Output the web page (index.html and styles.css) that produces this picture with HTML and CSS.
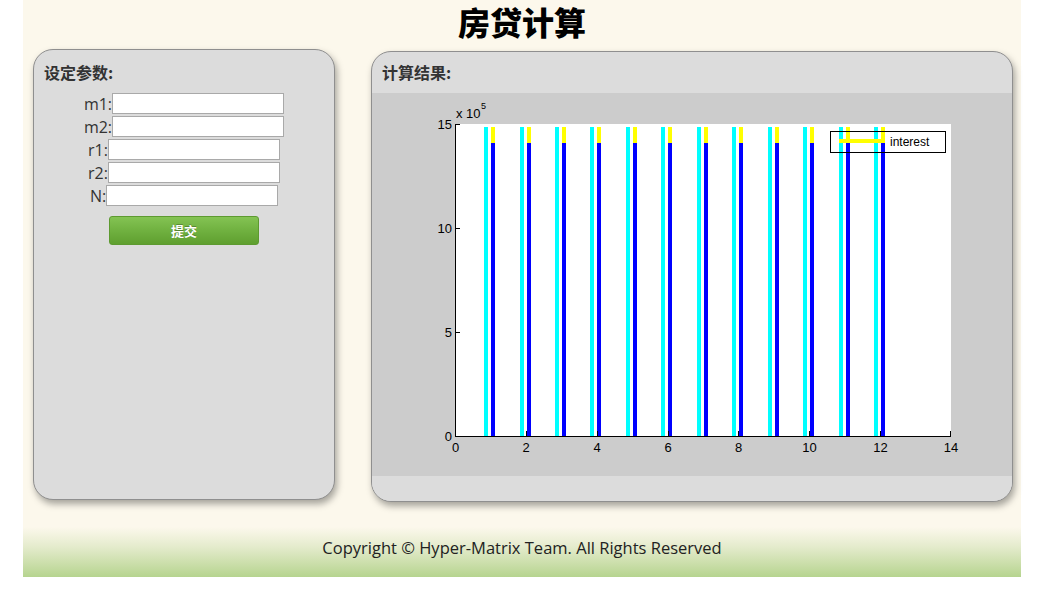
FILE: index.html
```html
<!DOCTYPE html>
<html lang="zh-CN">
<head>
<meta charset="utf-8">
<title>房贷计算</title>
<link rel="stylesheet" href="styles.css">
</head>
<body>
<div class="page">
  <h1 class="title">房贷计算</h1>
  <div class="main">
    <section class="panel panel-left">
      <h2 class="panel-title">设定参数:</h2>
      <form class="form">
        <div class="row"><label>m1:</label><input type="text"></div>
        <div class="row"><label>m2:</label><input type="text"></div>
        <div class="row"><label>r1:</label><input type="text"></div>
        <div class="row"><label>r2:</label><input type="text"></div>
        <div class="row"><label>N:</label><input type="text"></div>
        <div class="btn-row"><button type="button" class="btn">提交</button></div>
      </form>
    </section>
    <section class="panel panel-right">
      <h2 class="panel-title result-title">计算结果:</h2>
      <div class="chart">
        <svg width="639" height="383" viewBox="0 0 639 383" xmlns="http://www.w3.org/2000/svg" font-family="Liberation Sans, Arial, sans-serif">
          <rect x="83" y="31" width="496" height="312" fill="#ffffff"/>
          <g shape-rendering="crispEdges">
            <g fill="#00ffff">
              <rect x="112" y="34" width="4" height="309"/>
              <rect x="148" y="34" width="4" height="309"/>
              <rect x="183" y="34" width="4" height="309"/>
              <rect x="218" y="34" width="4" height="309"/>
              <rect x="254" y="34" width="4" height="309"/>
              <rect x="289" y="34" width="4" height="309"/>
              <rect x="325" y="34" width="4" height="309"/>
              <rect x="360" y="34" width="4" height="309"/>
              <rect x="396" y="34" width="4" height="309"/>
              <rect x="431" y="34" width="4" height="309"/>
              <rect x="467" y="34" width="4" height="309"/>
              <rect x="502" y="34" width="4" height="309"/>
            </g>
            <g fill="#ffff00">
              <rect x="119" y="34" width="4" height="16"/>
              <rect x="155" y="34" width="4" height="16"/>
              <rect x="190" y="34" width="4" height="16"/>
              <rect x="225" y="34" width="4" height="16"/>
              <rect x="261" y="34" width="4" height="16"/>
              <rect x="296" y="34" width="4" height="16"/>
              <rect x="332" y="34" width="4" height="16"/>
              <rect x="367" y="34" width="4" height="16"/>
              <rect x="403" y="34" width="4" height="16"/>
              <rect x="438" y="34" width="4" height="16"/>
              <rect x="474" y="34" width="4" height="16"/>
              <rect x="509" y="34" width="4" height="16"/>
            </g>
            <g fill="#0000ff">
              <rect x="119" y="50" width="4" height="293"/>
              <rect x="155" y="50" width="4" height="293"/>
              <rect x="190" y="50" width="4" height="293"/>
              <rect x="225" y="50" width="4" height="293"/>
              <rect x="261" y="50" width="4" height="293"/>
              <rect x="296" y="50" width="4" height="293"/>
              <rect x="332" y="50" width="4" height="293"/>
              <rect x="367" y="50" width="4" height="293"/>
              <rect x="403" y="50" width="4" height="293"/>
              <rect x="438" y="50" width="4" height="293"/>
              <rect x="474" y="50" width="4" height="293"/>
              <rect x="509" y="50" width="4" height="293"/>
            </g>
            <g stroke="#000000" stroke-width="1" fill="none">
              <path d="M83.5 31 V343.5 H579"/>
              <path d="M83.5 31.5 H88 M83.5 135.5 H88 M83.5 239.5 H88"/>
              <path d="M154.5 343 V338 M225.5 343 V338 M296.5 343 V338 M366.5 343 V338 M437.5 343 V338 M508.5 343 V338 M578.5 343 V338"/>
              <rect x="458.5" y="38.5" width="115" height="21"/>
            </g>
            <rect x="467" y="46" width="46" height="4" fill="#ffff00"/>
          </g>
          <text x="518" y="52.5" font-size="12" fill="#000">interest</text>
          <g font-size="13" fill="#000" text-anchor="end">
            <text x="80" y="36">15</text>
            <text x="80" y="140">10</text>
            <text x="80" y="244">5</text>
            <text x="80" y="348">0</text>
          </g>
          <text x="84" y="25" font-size="13" fill="#000">x 10</text>
          <text x="109" y="16" font-size="9" fill="#000">5</text>
          <g font-size="13" fill="#000" text-anchor="middle">
            <text x="83.5" y="359">0</text>
            <text x="154" y="359">2</text>
            <text x="225" y="359">4</text>
            <text x="296" y="359">6</text>
            <text x="366.5" y="359">8</text>
            <text x="437.5" y="359">10</text>
            <text x="508.5" y="359">12</text>
            <text x="579" y="359">14</text>
          </g>
        </svg>
      </div>
      <div class="panel-foot"></div>
    </section>
  </div>
  <footer class="footer">Copyright © Hyper-Matrix Team. All Rights Reserved</footer>
</div>
</body>
</html>
```
FILE: styles.css
```css
html, body {
  margin: 0;
  padding: 0;
  background: #ffffff;
}

body {
  font-family: "Open Sans", "Noto Sans CJK SC", sans-serif;
  color: #333333;
}

.page {
  width: 998px;
  margin-left: 23px;
  background: #fcf8ec;
  display: flex;
  flex-direction: column;
}

.title {
  margin: 0;
  height: 45px;
  line-height: 42px;
  text-align: center;
  font-family: "Noto Sans CJK SC", sans-serif;
  font-size: 32px;
  font-weight: 900;
  color: #000000;
}

.main {
  display: flex;
  align-items: flex-start;
  gap: 36px;
  padding: 4px 0 0 10px;
  height: 482px;
  box-sizing: border-box;
}

.panel {
  box-sizing: border-box;
  background: #dcdcdc;
  border: 1px solid #8f8f8f;
  border-radius: 20px;
  box-shadow: 2px 4px 7px rgba(0, 0, 0, 0.35);
  overflow: hidden;
}

.panel-left {
  width: 302px;
  height: 451px;
  padding: 12px 10px 0 10px;
}

.panel-right {
  width: 642px;
  height: 451px;
  margin-top: 2px;
  display: flex;
  flex-direction: column;
}

.panel-title {
  margin: 0;
  font-family: "Noto Sans CJK SC", sans-serif;
  font-size: 16px;
  font-weight: 700;
  line-height: 20px;
  color: #333333;
}

.result-title {
  height: 41px;
  padding: 10px 0 0 10px;
  box-sizing: border-box;
}

.form {
  margin-top: 11px;
  display: flex;
  flex-direction: column;
  align-items: center;
  gap: 2px;
}

.row {
  display: flex;
  align-items: center;
  height: 21px;
  font-size: 16px;
  color: #333333;
}

.row input {
  width: 172px;
  height: 21px;
  box-sizing: border-box;
  margin: 0;
  padding: 1px 3px;
  border: 1px solid #a9a9a9;
  background: #ffffff;
  font-size: 13px;
}

.btn-row {
  margin-top: 8px;
  display: flex;
  justify-content: center;
}

.btn {
  width: 150px;
  height: 29px;
  border: 1px solid #5d9a30;
  border-radius: 3px;
  background: linear-gradient(to bottom, #84c353 0%, #70b140 50%, #5f9f2f 100%);
  color: #ffffff;
  font-family: "Noto Sans CJK SC", sans-serif;
  font-size: 13px;
  font-weight: 700;
  text-shadow: 0 -1px 0 rgba(0, 0, 0, 0.25);
  cursor: pointer;
}

.chart {
  height: 383px;
  background: #cccccc;
  flex: none;
}

.chart svg {
  display: block;
}

.panel-foot {
  flex: 1;
  background: #dcdcdc;
}

.footer {
  height: 50px;
  box-sizing: border-box;
  padding-top: 10px;
  line-height: 22px;
  text-align: center;
  font-size: 16.5px;
  color: #222222;
  background: linear-gradient(to bottom, #fcf8ec 0%, #e4ebcc 40%, #b6d48f 100%);
}
```
